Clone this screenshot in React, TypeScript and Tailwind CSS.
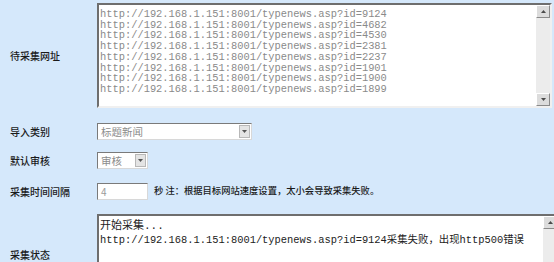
import React from 'react';

const urls = ['9124', '4682', '4530', '2381', '2237', '1901', '1900', '1899'];

function ScrollBar({ className = '' }: { className?: string }) {
  return (
    <div className={`flex w-[14px] shrink-0 flex-col bg-[#ececec] ${className}`}>
      <div className="flex h-[13px] items-center justify-center border border-t-white border-l-white border-b-[#8a8a8a] border-r-[#8a8a8a] bg-[#dcdcdc]">
        <svg width="5" height="3" viewBox="0 0 5 3"><path d="M2.5 0 L5 3 L0 3 Z" fill="#4a4a4a" /></svg>
      </div>
      <div className="flex-1" />
      <div className="flex h-[13px] items-center justify-center border border-t-white border-l-white border-b-[#8a8a8a] border-r-[#8a8a8a] bg-[#dcdcdc]">
        <svg width="5" height="3" viewBox="0 0 5 3"><path d="M0 0 L5 0 L2.5 3 Z" fill="#4a4a4a" /></svg>
      </div>
    </div>
  );
}

function Select({ value, width }: { value: string; width: string }) {
  return (
    <div className={`flex h-[17px] ${width} items-stretch border border-t-[#7a7a7a] border-l-[#7a7a7a] border-b-[#d8d8d8] border-r-[#d8d8d8] bg-white`}>
      <div className="flex-1 pl-[3px] text-[10.5px] leading-[15px] text-[#8c8c8c]">{value}</div>
      <div className="m-[1px] flex w-[11px] items-center justify-center border border-[#b8b8b8] bg-[#e4e4e4]">
        <svg width="5" height="3" viewBox="0 0 5 3"><path d="M0 0 L5 0 L2.5 3 Z" fill="#555" /></svg>
      </div>
    </div>
  );
}

function Label({ children }: { children: React.ReactNode }) {
  return <div className="w-[97px] shrink-0 pl-[10px] text-[10px] font-medium text-[#1a1a1a]">{children}</div>;
}

export default function App() {
  return (
    <div
      className="h-[262px] w-[554px] overflow-hidden bg-[#d5e8fb]"
      style={{ fontFamily: '"Noto Sans CJK SC", "Liberation Sans", sans-serif' }}
    >
      {/* 待采集网址 */}
      <div className="flex h-[116px] items-center pb-[5px]">
        <Label>待采集网址</Label>
        <div className="flex h-[105px] w-[455px] border-2 border-t-[#6e6e6e] border-l-[#6e6e6e] border-b-[#f0f0f0] border-r-[#f0f0f0] bg-white">
          <div
            className="flex-1 pl-[1px] pt-[4px] text-[10.4px] leading-[10.7px] text-[#8a8a8a]"
            style={{ fontFamily: '"Liberation Mono", monospace' }}
          >
            {urls.map((id) => (
              <div key={id}>http://192.168.1.151:8001/typenews.asp?id={id}</div>
            ))}
          </div>
          <ScrollBar />
        </div>
      </div>

      {/* 导入类别 */}
      <div className="flex h-[30px] items-center">
        <Label>导入类别</Label>
        <Select value="标题新闻" width="w-[155px]" />
      </div>

      {/* 默认审核 */}
      <div className="flex h-[29px] items-center">
        <Label>默认审核</Label>
        <Select value="审核" width="w-[51px]" />
      </div>

      {/* 采集时间间隔 */}
      <div className="flex h-[32px] items-center">
        <Label>采集时间间隔</Label>
        <div className="h-[17px] w-[51px] border border-t-[#7a7a7a] border-l-[#7a7a7a] border-b-[#d8d8d8] border-r-[#d8d8d8] bg-white pl-[3px] text-[10px] leading-[15px] text-[#9a9a9a]">
          4
        </div>
        <div className="ml-[6px] text-[9.3px] font-medium text-[#1a1a1a]">秒 注：根据目标网站速度设置，太小会导致采集失败。</div>
      </div>

      {/* 采集状态 */}
      <div className="flex items-center pt-[7px]">
        <Label>采集状态</Label>
        <div className="flex h-[80px] w-[462px] shrink-0 border-2 border-t-[#6e6e6e] border-l-[#6e6e6e] border-b-[#f0f0f0] border-r-[#f0f0f0] bg-white">
          <div
            className="flex-1 pl-[1px] pt-[3px] text-[10.4px] leading-[14px] text-[#222]"
            style={{ fontFamily: '"Liberation Mono", "Noto Sans CJK SC", monospace' }}
          >
            <div className="text-[11px]">开始采集...</div>
            <div>http://192.168.1.151:8001/typenews.asp?id=9124采集失败，出现http500错误</div>
          </div>
          <ScrollBar />
        </div>
      </div>
    </div>
  );
}
